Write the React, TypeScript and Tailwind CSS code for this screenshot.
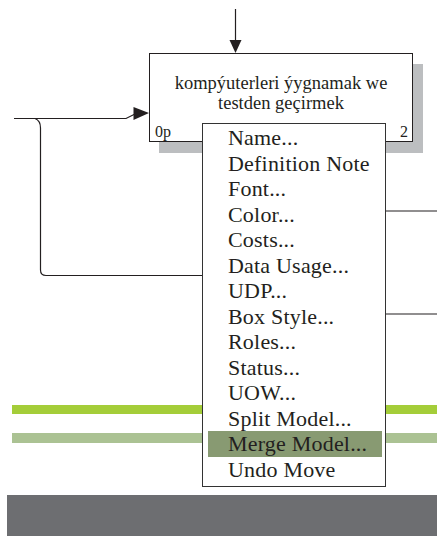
const items = [
  'Name...',
  'Definition Note',
  'Font...',
  'Color...',
  'Costs...',
  'Data Usage...',
  'UDP...',
  'Box Style...',
  'Roles...',
  'Status...',
  'UOW...',
  'Split Model...',
  'Merge Model...',
  'Undo Move',
]

const serif = { fontFamily: '"Liberation Serif", "Times New Roman", serif' }

export default function App() {
  return (
    <div className="relative w-[437px] h-[536px] bg-white overflow-hidden flex flex-col text-[#231f20]" style={serif}>
      {/* slide stripes */}
      <div className="mt-[405px] ml-[12px] h-[9px] bg-[#a4cd39]" />
      <div className="mt-[19px] ml-[12px] h-[10px] bg-[#abc293]" />
      <div className="mt-[52px] ml-[7px] flex-1 bg-[#6d6e71]" />

      {/* connectors */}
      <svg className="absolute inset-0" width="437" height="536" viewBox="0 0 437 536" fill="none">
        <g stroke="#231f20" strokeWidth="1.2">
          <path d="M235.5 9 V41" />
          <path d="M14 118.5 H126 L136 113.5" />
          <path d="M35 118.5 Q40.5 120.5 40.5 128 V270 Q40.5 275.5 46 275.5 H202" />
          <path d="M386 211 H437" />
          <path d="M386 314 H437" />
        </g>
        <polygon points="229.5,40 241.5,40 235.5,53" fill="#231f20" />
        <polygon points="133.5,107 149,113 133.5,120" fill="#231f20" />
      </svg>

      {/* activity box */}
      <div className="absolute left-[149px] top-[53px] w-[264px] h-[89px] bg-white border border-[#231f20] shadow-[10px_11px_0_0_#bcbec0]">
        <div className="pt-[19px] text-center text-[18.5px] leading-[20px]">
          kompýuterleri ýygnamak we
          <br />
          testden geçirmek
        </div>
        <span className="absolute left-[5px] bottom-[1px] text-[16px] leading-[16px]">0p</span>
        <span className="absolute right-[4px] bottom-[1px] text-[16px] leading-[16px]">2</span>
      </div>

      {/* context menu */}
      <div className="absolute left-[202px] top-[123px] w-[184px] bg-white border border-[#333] pt-[1px] pb-[4px]">
        {items.map((item) => (
          <div
            key={item}
            className={
              'h-[25.5px] ml-[5px] mr-[3px] pl-[20px] text-[22px] leading-[25.5px] tracking-[0.2px] whitespace-nowrap ' +
              (item === 'Merge Model...' ? 'bg-[#889a72]' : '')
            }
          >
            {item}
          </div>
        ))}
      </div>
    </div>
  )
}
